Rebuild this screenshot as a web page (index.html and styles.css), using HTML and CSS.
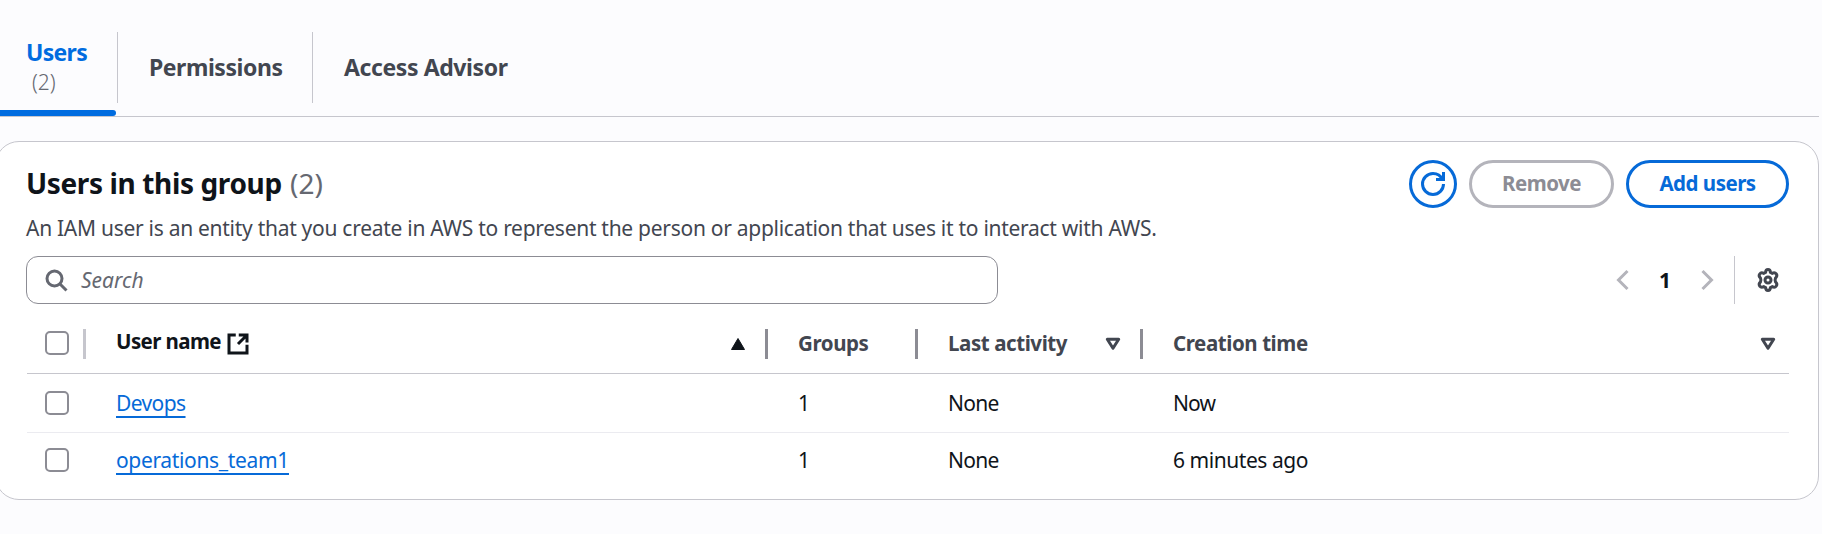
FILE: index.html
```html
<!DOCTYPE html>
<html lang="en">
<head>
<meta charset="utf-8">
<title>Users in this group</title>
<link rel="stylesheet" href="styles.css">
</head>
<body>
<nav class="tabs">
  <a class="tab tab-active"><span class="t t-users">Users</span><span class="t tab-count">(2)</span></a>
  <a class="tab tab-perm"><span class="t t-perm">Permissions</span></a>
  <a class="tab tab-adv"><span class="t t-adv">Access Advisor</span></a>
</nav>
<section class="card">
  <header class="card-header">
    <h2 class="title"><span class="t t-title">Users in this group</span> <span class="t count">(2)</span></h2>
    <div class="actions">
      <button class="btn btn-icon"><svg width="24" height="24" viewBox="0 0 16 16" class="icon"><path d="M15 8c0 3.870-3.130 7-7 7s-7-3.130-7-7 3.130-7 7-7c2.790 0 5.200 1.630 6.330 4"/><path d="M10 5h5V0"/></svg></button>
      <button class="btn btn-disabled"><span class="t t-remove">Remove</span></button>
      <button class="btn btn-add"><span class="t t-add">Add users</span></button>
    </div>
  </header>
  <p class="desc"><span class="t t-desc">An IAM user is an entity that you create in AWS to represent the person or application that uses it to interact with AWS.</span></p>
  <div class="toolbar">
    <div class="search">
      <svg width="24" height="24" viewBox="0 0 16 16" class="icon"><circle cx="7" cy="7" r="5"/><path d="m15 15-4.500-4.500"/></svg>
      <span class="t t-search">Search</span>
    </div>
    <div class="pager">
      <svg width="24" height="24" viewBox="0 0 16 16" class="icon icon-off"><path d="M11 2 5 8l6 6"/></svg>
      <span class="page"><span class="t">1</span></span>
      <svg width="24" height="24" viewBox="0 0 16 16" class="icon icon-off"><path d="m5 2 6 6-6 6"/></svg>
      <span class="pager-line"></span>
      <svg width="24" height="24" viewBox="0 0 24 24" class="icon icon-gear"><path d="M9.600 4.300Q9.800 1.500 12 1.500T14.400 4.300L16.200 5.300Q18.900 4.100 20.300 6T19.500 10.100Q18.700 12 19.500 13.900Q21.700 15.900 20.300 18T16.200 18.700L14.400 19.700Q14.200 22.500 12 22.500T9.600 19.700L7.800 18.700Q5.100 19.900 3.700 18T4.500 13.900Q5.300 12 4.500 10.100Q2.300 8.100 3.700 6T7.800 5.300Z"/><circle cx="12" cy="12" r="3"/></svg>
    </div>
  </div>
  <div class="table">
    <div class="row head">
      <div class="cell-check"><span class="check"></span><i class="sep sep-light"></i></div>
      <div class="cell dark"><span class="name-head"><span class="t t-name">User name</span><svg width="24" height="24" viewBox="0 0 16 16" class="icon"><path d="M14 8.500V14H2V2h4.500M8.500 2H14v5M14 2 8 8"/></svg></span><svg width="16" height="14" viewBox="0 0 16 14" class="sort"><path d="M8 1.500 1.500 12.500h13z" class="solid"/></svg><i class="sep"></i></div>
      <div class="cell"><span class="t t-groups">Groups</span><i class="sep"></i></div>
      <div class="cell"><span class="t t-last">Last activity</span><svg width="16" height="14" viewBox="0 0 16 14" class="sort"><path d="M8 11.300 2.300 2.300h11.400z"/></svg><i class="sep"></i></div>
      <div class="cell cell-last"><span class="t t-create">Creation time</span><svg width="16" height="14" viewBox="0 0 16 14" class="sort"><path d="M8 11.300 2.300 2.300h11.400z"/></svg></div>
    </div>
    <div class="row">
      <div class="cell-check"><span class="check"></span></div>
      <div class="cell"><a class="link t t-devops">Devops</a></div>
      <div class="cell"><span class="t">1</span></div>
      <div class="cell"><span class="t t-none">None</span></div>
      <div class="cell"><span class="t t-now">Now</span></div>
    </div>
    <div class="row row-last">
      <div class="cell-check"><span class="check"></span></div>
      <div class="cell"><a class="link t t-ops">operations_team1</a></div>
      <div class="cell"><span class="t">1</span></div>
      <div class="cell"><span class="t t-none">None</span></div>
      <div class="cell"><span class="t t-ago">6 minutes ago</span></div>
    </div>
  </div>
</section>
</body>
</html>
```
FILE: styles.css
```css
* { box-sizing: border-box; }
body {
  margin: 0;
  background: #fcfcfe;
  color: #0f141a;
  font: 21px/30px "Noto Sans", "Open Sans", sans-serif;
  overflow: hidden;
}
.t { white-space: nowrap; }
.icon { display: block; flex: none; fill: none; stroke: currentColor; stroke-width: 2; }

.tabs {
  display: flex;
  align-items: flex-start;
  width: 1819px;
  height: 117px;
  padding-top: 32px;
  border-bottom: 1px solid #c6c6cd;
}
.tab {
  display: flex;
  flex-direction: column;
  justify-content: center;
  height: 71px;
  padding: 0 30px 2px 31px;
  font-size: 23px;
  font-weight: 700;
  letter-spacing: -0.45px;
  color: #424650;
}
.tab-active {
  position: relative;
  width: 118px;
  padding: 0 0 2px 26px;
  border-right: 1px solid #c6c6cd;
  color: #006ce0;
}
.tab-active::after {
  content: "";
  position: absolute;
  left: 0;
  top: 78px;
  width: 116px;
  height: 6px;
  border-radius: 0 3px 3px 0;
  background: #006ce0;
}
.t-users { letter-spacing: -0.7px; }
.t-adv { letter-spacing: -0.4px; }
.tab-count { margin-left: 6px; font-size: 21px; font-weight: 300; letter-spacing: 0; color: #656871; }
.tab-perm { width: 195px; border-right: 1px solid #c6c6cd; }

.card {
  width: 1824px;
  height: 359px;
  margin: 24px 0 0 -5px;
  padding: 18px 29px 0 30px;
  border: 1px solid #c6c6cd;
  border-radius: 24px;
  background: #fff;
}
.card-header { display: flex; justify-content: space-between; height: 48px; }
.title { margin: 5px 0 0; font-size: 28px; line-height: 36px; font-weight: 700; }
.t-title { letter-spacing: -0.37px; }
.count { margin-left: 1px; font-weight: 400; color: #656871; }
.actions { display: flex; gap: 12px; }
.btn {
  display: flex;
  align-items: center;
  justify-content: center;
  width: 145px;
  height: 48px;
  padding: 0;
  border: 3px solid #066ad8;
  border-radius: 24px;
  background: #fff;
  color: #066ad8;
  font: inherit;
  font-size: 20.5px;
  font-weight: 700;
  letter-spacing: -0.5px;
}
.btn .t { padding-bottom: 2px; }
.btn-icon { width: 48px; }
.btn-disabled { border-color: #b4b4bb; color: #8c8c94; }
.btn-add { width: 163px; }
.desc { margin: 5px 0 13px; letter-spacing: -0.28px; color: #424650; }

.toolbar { display: flex; justify-content: space-between; height: 48px; }
.search {
  display: flex;
  align-items: center;
  gap: 13px;
  width: 972px;
  padding-left: 17px;
  border: 1px solid #8c8c94;
  border-radius: 12px;
  color: #656871;
  font-style: italic;
}
.pager { display: flex; align-items: center; padding-right: 9px; color: #424650; }
.icon-off { color: #b4b4bb; }
.page { width: 60px; text-align: center; font-weight: 700; color: #0f141a; }
.pager-line { width: 1px; height: 48px; margin: 0 21px 0 15px; background: #c6c6cd; }
.icon-gear { stroke-width: 3; }

.row {
  display: grid;
  grid-template-columns: 59px 682px 150px 225px 1fr;
  height: 59px;
  padding-top: 14px;
  border-bottom: 1px solid #ebebf0;
}
.table { padding-left: 1px; }
.row-last { padding-top: 12px; border: 0; }
.head {
  height: 70px;
  padding-top: 24px;
  border-color: #c6c6cd;
  font-size: 20.5px;
  font-weight: 700;
  letter-spacing: -0.42px;
  color: #424650;
}
.cell-check { display: flex; align-items: flex-start; justify-content: space-between; padding-left: 18px; }
.check { width: 24px; height: 24px; margin-top: 3px; border: 2px solid #8c8c94; border-radius: 5px; }
.cell { display: flex; align-items: flex-start; padding-left: 30px; }
.dark { color: #0f141a; }
.name-head { display: flex; align-items: center; gap: 5px; height: 26px; margin: 0 auto 0 0; }
.t-name { letter-spacing: -0.6px; }
.name-head .icon { margin-top: 5px; }
.sep { width: 3px; height: 30px; margin: 1px 0 0 auto; background: #8c8c94; }
.sep-light { background: #c6c6cd; }
.sort { margin: 9px 19px 0 auto; fill: none; stroke: currentColor; stroke-width: 3; stroke-linejoin: round; }
.sort + .sep { margin-left: 0; }
.solid { fill: currentColor; stroke-width: 1; }
.cell-last .sort { margin-right: 13px; }
.link { color: #066ad8; text-decoration: underline; text-decoration-thickness: 2px; text-underline-offset: 5px; text-decoration-skip-ink: none; }
.t-devops { letter-spacing: -0.6px; }
.t-ops { letter-spacing: -0.34px; }
.t-none { letter-spacing: -0.75px; }
.t-now { letter-spacing: -0.9px; }
.t-ago { letter-spacing: -0.45px; }
```
